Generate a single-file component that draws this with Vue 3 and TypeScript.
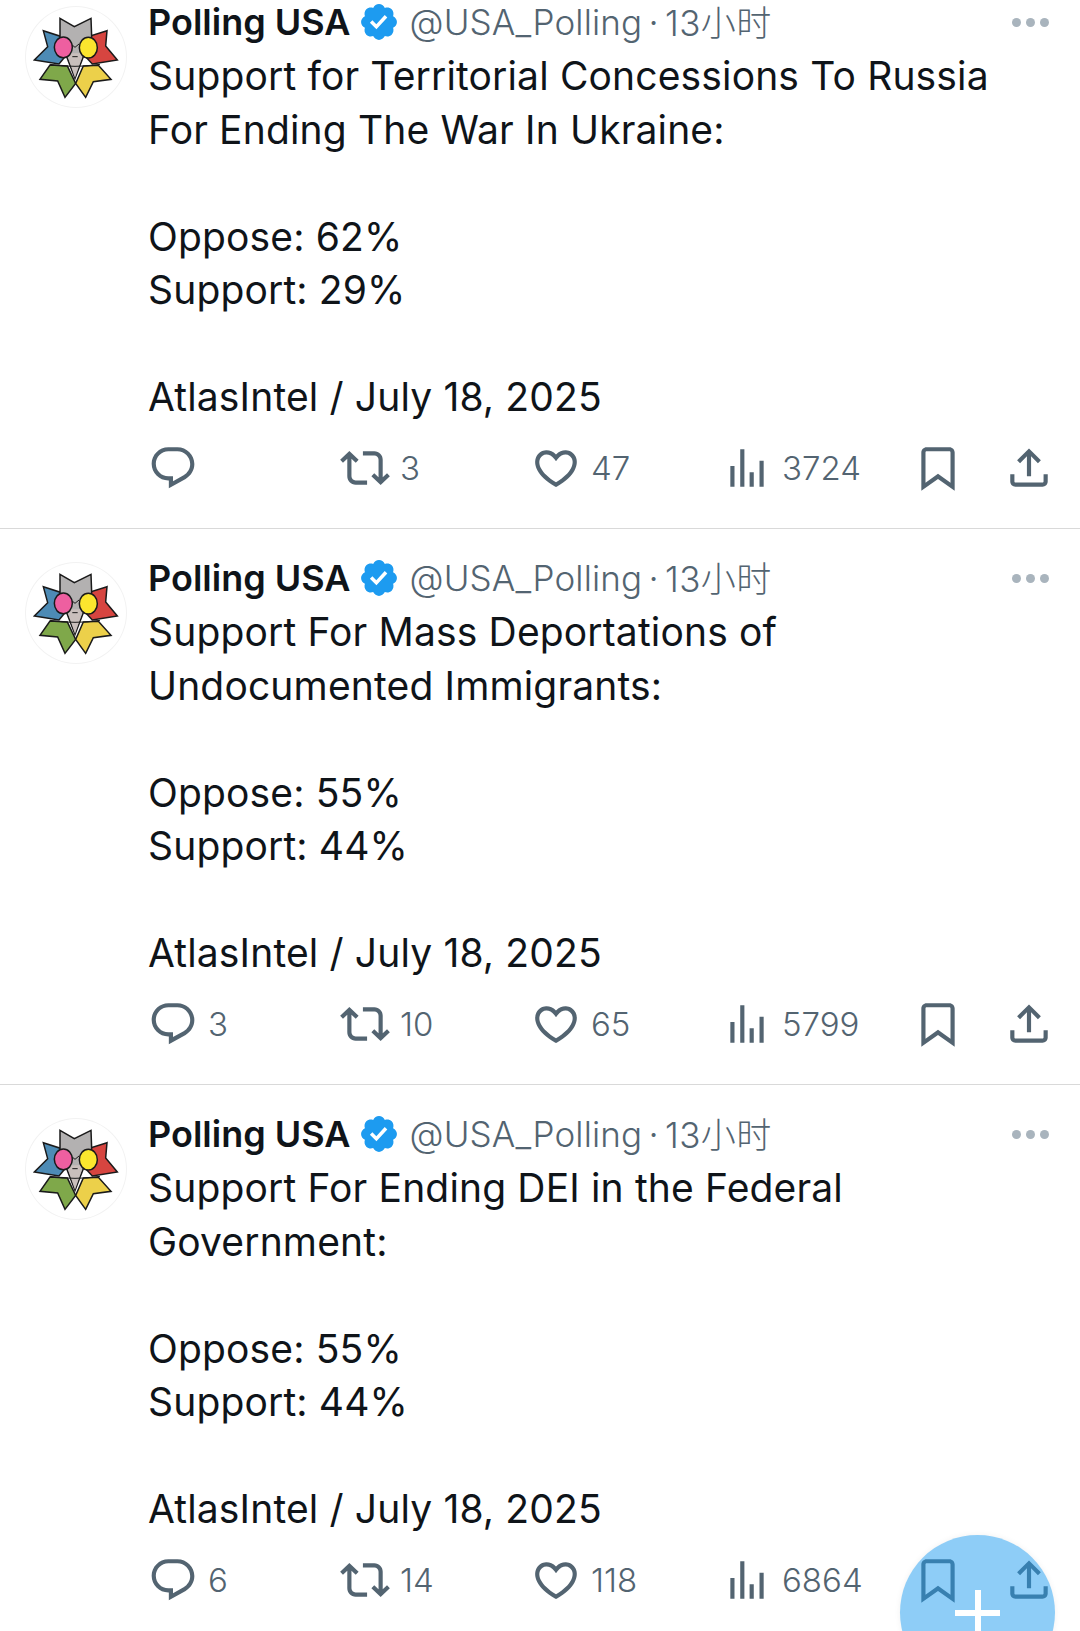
<script setup lang="ts">
interface Tweet {
  text: string
  reply: string
  retweet: string
  like: string
  views: string
}
const tweets: Tweet[] = [
  {
    text: 'Support for Territorial Concessions To Russia\nFor Ending The War In Ukraine:\n\nOppose: 62%\nSupport: 29%\n\nAtlasIntel / July 18, 2025',
    reply: '', retweet: '3', like: '47', views: '3724',
  },
  {
    text: 'Support For Mass Deportations of\nUndocumented Immigrants:\n\nOppose: 55%\nSupport: 44%\n\nAtlasIntel / July 18, 2025',
    reply: '3', retweet: '10', like: '65', views: '5799',
  },
  {
    text: 'Support For Ending DEI in the Federal\nGovernment:\n\nOppose: 55%\nSupport: 44%\n\nAtlasIntel / July 18, 2025',
    reply: '6', retweet: '14', like: '118', views: '6864',
  },
]
const icons = {
  reply: 'M1.751 10c0-4.42 3.584-8 8.005-8h4.366c4.49 0 8.129 3.64 8.129 8.13 0 2.96-1.607 5.68-4.196 7.11l-8.054 4.46v-3.69h-.067c-4.49.1-8.183-3.51-8.183-8.01zm8.005-6c-3.317 0-6.005 2.69-6.005 6 0 3.37 2.77 6.08 6.138 6.01l.351-.01h1.761v2.3l5.087-2.81c1.951-1.08 3.163-3.13 3.163-5.36 0-3.39-2.744-6.13-6.129-6.13H9.756z',
  retweet: 'M4.5 3.88l4.432 4.14-1.364 1.46L5.5 7.55V16c0 1.1.896 2 2 2H13v2H7.5c-2.209 0-4-1.79-4-4V7.55L1.432 9.48.068 8.02 4.5 3.88zM16.5 6H11V4h5.5c2.209 0 4 1.79 4 4v8.45l2.068-1.93 1.364 1.46-4.432 4.14-4.432-4.14 1.364-1.46 2.068 1.93V8c0-1.1-.896-2-2-2z',
  like: 'M16.697 5.5c-1.222-.06-2.679.51-3.89 2.16l-.805 1.09-.806-1.09C9.984 6.01 8.526 5.44 7.304 5.5c-1.243.07-2.349.78-2.91 1.91-.552 1.12-.633 2.78.479 4.82 1.074 1.97 3.257 4.27 7.129 6.61 3.87-2.34 6.052-4.64 7.126-6.61 1.111-2.04 1.03-3.7.477-4.82-.561-1.13-1.666-1.84-2.908-1.91zm4.187 7.69c-1.351 2.48-4.001 5.12-8.379 7.67l-.503.3-.504-.3c-4.379-2.55-7.029-5.19-8.382-7.67-1.36-2.5-1.41-4.86-.514-6.67.887-1.79 2.647-2.91 4.601-3.01 1.651-.09 3.368.56 4.798 2.01 1.429-1.45 3.146-2.1 4.796-2.01 1.954.1 3.714 1.22 4.601 3.01.896 1.81.846 4.17-.514 6.67z',
  views: 'M8.75 21V3h2v18h-2zM18 21V8.5h2V21h-2zM4 21l.004-10h2L6 21H4zm9.248 0v-7h2v7h-2z',
  bookmark: 'M4 4.5C4 3.12 5.119 2 6.5 2h11C18.881 2 20 3.12 20 4.5v18.44l-8-5.71-8 5.71V4.5zM6.5 4c-.276 0-.5.22-.5.5v14.56l6-4.29 6 4.29V4.5c0-.28-.224-.5-.5-.5h-11z',
  share: 'M12 2.59l5.7 5.7-1.41 1.42L13 6.41V16h-2V6.41l-3.3 3.3-1.41-1.42L12 2.59zM21 15l-.02 3.51c0 1.38-1.12 2.49-2.5 2.49H5.5C4.11 21 3 19.88 3 18.5V15h2v3.5c0 .28.22.5.5.5h12.98c.28 0 .5-.22.5-.5L19 15h2z',
  verified: 'M22.25 12c0-1.43-.88-2.67-2.19-3.34.46-1.39.2-2.9-.81-3.91s-2.52-1.27-3.91-.81c-.66-1.31-1.91-2.19-3.34-2.19s-2.67.88-3.33 2.19c-1.4-.46-2.91-.2-3.92.81s-1.26 2.52-.8 3.91c-1.31.67-2.2 1.91-2.2 3.34s.89 2.67 2.2 3.34c-.46 1.39-.21 2.9.8 3.91s2.52 1.26 3.91.81c.67 1.31 1.91 2.19 3.34 2.19s2.68-.88 3.34-2.19c1.39.45 2.9.2 3.91-.81s1.27-2.52.81-3.91c1.31-.67 2.19-1.91 2.19-3.34zm-11.71 4.2L6.8 12.46l1.41-1.42 2.26 2.26 4.8-5.23 1.47 1.36-6.2 6.77z',
}
</script>

<template>
  <div class="page">
    <div class="feed">
      <article v-for="(t, i) in tweets" :key="i" class="tweet">
        <div class="avatar">
          <svg viewBox="30 18 306 306" width="102" height="102">
            <g stroke="#1a1a1a" stroke-width="4.5" stroke-linejoin="miter">
              <polygon points="85,92 140,110 150,170 132,192 58,180 98,140" fill="#4d8bb5" />
              <polygon points="276,92 225,108 212,170 232,192 307,180 272,138" fill="#d64540" />
              <polygon points="105,195 157,198 182,250 150,292 128,243 75,238" fill="#7fa84a" />
              <polygon points="205,198 250,196 288,238 235,245 212,292 182,250" fill="#ecd04a" />
              <polygon points="135,55 178,80 228,55 230,110 205,170 180,235 155,170 135,110" fill="#b3b1b1" />
              <polygon points="155,160 205,160 180,233" fill="#c9bfbc" stroke="none" />
              <path d="M172 170h16" stroke-width="3" fill="none" />
              <path d="M105 193q75 12 150 0" stroke-width="3" fill="none" />
              <path d="M168 132l12 10 12-10" stroke-width="3" fill="none" />
              <ellipse cx="145" cy="142" rx="27" ry="31" fill="#ee5fa0" />
              <ellipse cx="220" cy="143" rx="27" ry="31" fill="#fbe62e" />
            </g>
          </svg>
        </div>
        <div class="main">
          <div class="meta">
            <span class="name">Polling USA</span>
            <svg class="badge" viewBox="0 0 24 24"><path :d="icons.verified" /></svg>
            <span class="handle">@USA_Polling</span>
            <span class="sep">·</span>
            <span class="time">13小时</span>
            <span class="more"><i /><i /><i /></span>
          </div>
          <div class="body">{{ t.text }}</div>
          <div class="actions">
            <div class="act">
              <svg class="reply" viewBox="0 0 24 24"><path :d="icons.reply" /></svg>
              <span class="count">{{ t.reply }}</span>
            </div>
            <div class="act">
              <svg class="retweet" viewBox="0 0 24 24"><path :d="icons.retweet" /></svg>
              <span class="count">{{ t.retweet }}</span>
            </div>
            <div class="act">
              <svg class="like" viewBox="0 0 24 24"><path :d="icons.like" /></svg>
              <span class="count">{{ t.like }}</span>
            </div>
            <div class="act">
              <svg class="views" viewBox="0 0 24 24"><path :d="icons.views" /></svg>
              <span class="count">{{ t.views }}</span>
            </div>
            <div class="act">
              <svg class="bookmark" viewBox="0 0 24 24"><path :d="icons.bookmark" /></svg>
            </div>
            <div class="act">
              <svg class="share" viewBox="0 0 24 24"><path :d="icons.share" /></svg>
            </div>
          </div>
        </div>
      </article>
    </div>
    <div class="fab"><span class="plus-h" /><span class="plus-v" /></div>
  </div>
</template>

<style>
html, body { margin: 0; background: #fff; }
</style>

<style scoped>
.page {
  position: relative;
  width: 1080px;
  height: 1631px;
  overflow: hidden;
  background: #fff;
  color: #0f1419;
  font-family: Inter, "Noto Sans CJK SC", sans-serif;
}
.feed { margin-top: -27px; }
.tweet {
  display: flex;
  height: 556px;
  box-sizing: border-box;
  border-bottom: 1px solid #d9d9d9;
  padding: 27px 0 0 25px;
}
.avatar {
  width: 102px;
  height: 102px;
  margin: 6px 21px 0 0;
  flex: none;
  border-radius: 50%;
  box-shadow: 0 0 0 1px #f2f2f2 inset;
}
.avatar svg { display: block; }
.main { flex: 1; min-width: 0; }
.meta {
  display: flex;
  align-items: center;
  height: 44px;
  font-size: 36px;
  white-space: nowrap;
}
.name { font-weight: 600; font-size: 36px; }
.badge { width: 42px; height: 42px; fill: #1d9bf0; margin-left: 8px; }
.handle { color: #536471; margin-left: 9px; font-weight: 300; letter-spacing: 0.15px; font-size: 35px; }
.sep { color: #536471; margin: 0 7px; font-size: 30px; }
.time { color: #536471; font-weight: 300; font-size: 35px; letter-spacing: 0.4px; position: relative; top: -2px; }
.more { margin-left: auto; margin-right: 31px; display: flex; gap: 5px; }
.more i { width: 9px; height: 9px; border-radius: 50%; background: #a9b4bd; }
.body {
  margin-top: 5px;
  font-size: 39px;
  line-height: 53.5px;
  white-space: pre-line;
  font-weight: 400;
  letter-spacing: 0.15px;
}
.actions {
  display: grid;
  grid-template-columns: 191px 195px 195px 191px 89px 60px;
  margin-top: 19px;
  height: 44px;
  align-items: center;
}
.act { display: flex; align-items: center; color: #536471; font-size: 33px; font-weight: 300; }
.act svg { fill: #536471; flex: none; display: block; }
.reply { width: 50px; height: 50px; margin-left: 0; }
.retweet { width: 50px; height: 50px; margin-left: 1px; }
.like { width: 50px; height: 50px; margin-left: -3px; }
.views { width: 50px; height: 50px; margin-left: -7px; }
.bookmark { width: 50px; height: 50px; margin-left: -7px; }
.share { width: 50px; height: 50px; margin-left: -5px; }
.count { margin-left: 10px; }
.fab {
  position: absolute;
  left: 900px;
  top: 1535px;
  width: 155px;
  height: 155px;
  border-radius: 50%;
  background: rgba(29, 155, 240, 0.5);
  box-shadow: 0 0 6px rgba(0, 0, 0, 0.06);
}
.plus-h { position: absolute; left: 55px; top: 75px; width: 45px; height: 6px; background: #fff; }
.plus-v { position: absolute; left: 75px; top: 55px; width: 6px; height: 45px; background: #fff; }
</style>
